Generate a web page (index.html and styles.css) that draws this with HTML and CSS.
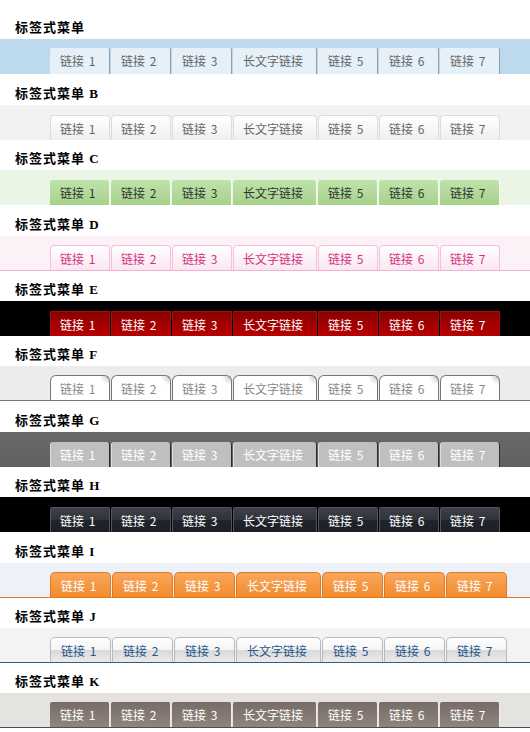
FILE: index.html
```html
<!DOCTYPE html>
<html lang="zh-CN">
<head>
    <meta charset="UTF-8">
    <meta name="viewport" content="width=device-width, initial-scale=1.0">
    <title>标签式菜单</title>
    <link rel="stylesheet" href="styles.css">
</head>
<body>
    <div class="menu menu-a">
        <h3 class="menu-title">标签式菜单</h3>
        <div class="menu-bar">
            <ul class="tabs">
                <li><a href="#">链接 1</a></li>
                <li><a href="#">链接 2</a></li>
                <li><a href="#">链接 3</a></li>
                <li><a href="#">长文字链接</a></li>
                <li><a href="#">链接 5</a></li>
                <li><a href="#">链接 6</a></li>
                <li><a href="#">链接 7</a></li>
            </ul>
        </div>
    </div>

    <div class="menu menu-b">
        <h3 class="menu-title">标签式菜单 B</h3>
        <div class="menu-bar">
            <ul class="tabs">
                <li><a href="#">链接 1</a></li>
                <li><a href="#">链接 2</a></li>
                <li><a href="#">链接 3</a></li>
                <li><a href="#">长文字链接</a></li>
                <li><a href="#">链接 5</a></li>
                <li><a href="#">链接 6</a></li>
                <li><a href="#">链接 7</a></li>
            </ul>
        </div>
    </div>

    <div class="menu menu-c">
        <h3 class="menu-title">标签式菜单 C</h3>
        <div class="menu-bar">
            <ul class="tabs">
                <li><a href="#">链接 1</a></li>
                <li><a href="#">链接 2</a></li>
                <li><a href="#">链接 3</a></li>
                <li><a href="#">长文字链接</a></li>
                <li><a href="#">链接 5</a></li>
                <li><a href="#">链接 6</a></li>
                <li><a href="#">链接 7</a></li>
            </ul>
        </div>
    </div>

    <div class="menu menu-d">
        <h3 class="menu-title">标签式菜单 D</h3>
        <div class="menu-bar">
            <ul class="tabs">
                <li><a href="#">链接 1</a></li>
                <li><a href="#">链接 2</a></li>
                <li><a href="#">链接 3</a></li>
                <li><a href="#">长文字链接</a></li>
                <li><a href="#">链接 5</a></li>
                <li><a href="#">链接 6</a></li>
                <li><a href="#">链接 7</a></li>
            </ul>
        </div>
    </div>

    <div class="menu menu-e">
        <h3 class="menu-title">标签式菜单 E</h3>
        <div class="menu-bar">
            <ul class="tabs">
                <li><a href="#">链接 1</a></li>
                <li><a href="#">链接 2</a></li>
                <li><a href="#">链接 3</a></li>
                <li><a href="#">长文字链接</a></li>
                <li><a href="#">链接 5</a></li>
                <li><a href="#">链接 6</a></li>
                <li><a href="#">链接 7</a></li>
            </ul>
        </div>
    </div>

    <div class="menu menu-f">
        <h3 class="menu-title">标签式菜单 F</h3>
        <div class="menu-bar">
            <ul class="tabs">
                <li><a href="#">链接 1</a></li>
                <li><a href="#">链接 2</a></li>
                <li><a href="#">链接 3</a></li>
                <li><a href="#">长文字链接</a></li>
                <li><a href="#">链接 5</a></li>
                <li><a href="#">链接 6</a></li>
                <li><a href="#">链接 7</a></li>
            </ul>
        </div>
    </div>

    <div class="menu menu-g">
        <h3 class="menu-title">标签式菜单 G</h3>
        <div class="menu-bar">
            <ul class="tabs">
                <li><a href="#">链接 1</a></li>
                <li><a href="#">链接 2</a></li>
                <li><a href="#">链接 3</a></li>
                <li><a href="#">长文字链接</a></li>
                <li><a href="#">链接 5</a></li>
                <li><a href="#">链接 6</a></li>
                <li><a href="#">链接 7</a></li>
            </ul>
        </div>
    </div>

    <div class="menu menu-h">
        <h3 class="menu-title">标签式菜单 H</h3>
        <div class="menu-bar">
            <ul class="tabs">
                <li><a href="#">链接 1</a></li>
                <li><a href="#">链接 2</a></li>
                <li><a href="#">链接 3</a></li>
                <li><a href="#">长文字链接</a></li>
                <li><a href="#">链接 5</a></li>
                <li><a href="#">链接 6</a></li>
                <li><a href="#">链接 7</a></li>
            </ul>
        </div>
    </div>

    <div class="menu menu-i">
        <h3 class="menu-title">标签式菜单 I</h3>
        <div class="menu-bar">
            <ul class="tabs">
                <li><a href="#">链接 1</a></li>
                <li><a href="#">链接 2</a></li>
                <li><a href="#">链接 3</a></li>
                <li><a href="#">长文字链接</a></li>
                <li><a href="#">链接 5</a></li>
                <li><a href="#">链接 6</a></li>
                <li><a href="#">链接 7</a></li>
            </ul>
        </div>
    </div>

    <div class="menu menu-j">
        <h3 class="menu-title">标签式菜单 J</h3>
        <div class="menu-bar">
            <ul class="tabs">
                <li><a href="#">链接 1</a></li>
                <li><a href="#">链接 2</a></li>
                <li><a href="#">链接 3</a></li>
                <li><a href="#">长文字链接</a></li>
                <li><a href="#">链接 5</a></li>
                <li><a href="#">链接 6</a></li>
                <li><a href="#">链接 7</a></li>
            </ul>
        </div>
    </div>

    <div class="menu menu-k">
        <h3 class="menu-title">标签式菜单 K</h3>
        <div class="menu-bar">
            <ul class="tabs">
                <li><a href="#">链接 1</a></li>
                <li><a href="#">链接 2</a></li>
                <li><a href="#">链接 3</a></li>
                <li><a href="#">长文字链接</a></li>
                <li><a href="#">链接 5</a></li>
                <li><a href="#">链接 6</a></li>
                <li><a href="#">链接 7</a></li>
            </ul>
        </div>
    </div>
</body>
</html>
```

FILE: styles.css
```css
body {
    margin: 0;
    padding-top: 9px;
    background: #fff;
    font-family: "Noto Sans CJK SC", sans-serif;
}
.menu-title {
    margin: 0;
    padding: 8.4px 0 0 15px;
    height: 22px;
    line-height: 22px;
    font-family: "Liberation Serif", "Noto Sans CJK SC", serif;
    font-size: 13px;
    font-weight: bold;
    letter-spacing: 1px;
    color: #000;
}
.menu-bar {
    box-sizing: border-box;
    height: 35px;
    padding-left: 50px;
    display: flex;
    align-items: flex-end;
}
.tabs {
    display: flex;
    gap: 1px;
    margin: 0;
    padding: 0;
    list-style: none;
}
.tabs a {
    display: block;
    box-sizing: border-box;
    min-width: 60px;
    height: 25px;
    padding: 0 13px 0 10px;
    line-height: 25px;
    font-size: 12px;
    word-spacing: 2px;
    white-space: nowrap;
    text-decoration: none;
}

/* A - light blue */
.menu-a .menu-bar { background: #bcd9ed; }
.menu-a .tabs a {
    height: 26px;
    line-height: 26px;
    background: #e5f0f8;
    border-right: 1px solid #8e9eac;
    border-radius: 2px 2px 0 0;
    color: #666;
}

/* B - light grey */
.menu-b .menu-bar { background: #f2f2f2; }
.menu-b .tabs a {
    padding-left: 9px;
    background: linear-gradient(#fff, #efefef);
    border: 1px solid #dcdcdc;
    border-bottom: 0;
    border-radius: 4px 4px 0 0;
    color: #666;
}

/* C - green */
.menu-c .menu-bar { background: #eaf5e6; }
.menu-c .tabs a {
    background: linear-gradient(#bfe3aa, #a6d28c);
    border-right: 1px solid #f6fbf3;
    border-radius: 3px 3px 0 0;
    color: #333;
}

/* D - pink */
.menu-d .menu-bar {
    background: #fcf1f7;
    border-bottom: 1px solid #eeb3d2;
}
.menu-d .tabs a {
    padding-left: 9px;
    background: linear-gradient(#fff, #fbe6f1);
    border: 1px solid #f4c0da;
    border-bottom: 0;
    border-radius: 4px 4px 0 0;
    color: #d2337f;
}

/* E - red on black */
.menu-e .menu-bar { background: #000; }
.menu-e .tabs a {
    padding-left: 9px;
    background: linear-gradient(#8a0000, #b80000);
    border: 1px solid #a30c0c;
    border-bottom: 0;
    color: #fff;
}

/* F - outlined, curled corner */
.menu-f .menu-bar {
    background: #ececec;
    border-bottom: 1px solid #777;
}
.menu-f .tabs a {
    padding-left: 9px;
    background: radial-gradient(circle at 100% 0, #c4c4c4 0, #fff 9px), #fff;
    border: 1px solid #777;
    border-bottom: 0;
    border-radius: 6px 6px 0 0;
    color: #888;
}

/* G - dark grey */
.menu-g .menu-bar { background: linear-gradient(#6a6a6a, #606060); }
.menu-g .tabs a {
    padding-left: 9px;
    background: #bfbfbf;
    border-left: 1px solid #dcdcdc;
    border-right: 1px solid #2b2b2b;
    border-radius: 3px 3px 0 0;
    color: #fff;
}

/* H - black glossy */
.menu-h .menu-bar { background: #000; }
.menu-h .tabs a {
    padding-left: 9px;
    background: linear-gradient(#3c4149 0, #2f343b 50%, #22262c 50%, #1b1f25 100%);
    border: 1px solid #50545b;
    border-bottom: 0;
    border-radius: 2px 2px 0 0;
    color: #fff;
}

/* I - orange */
.menu-i .menu-bar {
    background: #edf2f9;
    border-bottom: 1px solid #e3781e;
}
.menu-i .tabs a,
.menu-j .tabs a {
    min-width: 61px;
    padding: 0 13px 0 10px;
    border-radius: 5px 5px 0 0;
}
.menu-i .tabs a {
    background: linear-gradient(#f9a65c, #f28b2c);
    border: 1px solid #e3781e;
    border-bottom: 0;
    color: #fff;
}

/* J - silver with blue text */
.menu-j .menu-bar {
    background: #f3f3f3;
    border-bottom: 1px solid #2d5d8b;
}
.menu-j .tabs a {
    background: linear-gradient(#fff 0, #f5f5f5 48%, #d9d9d9 52%, #ebebeb 100%);
    border: 1px solid #b9b9b9;
    border-bottom: 0;
    color: #24578a;
}

/* K - taupe */
.menu-k .menu-bar {
    background: #e5e3df;
    border-bottom: 1px solid #4d4d55;
}
.menu-k .tabs a {
    background: linear-gradient(#776c67, #8e857b);
    border-right: 1px solid #eeece8;
    border-radius: 2px 2px 0 0;
    color: #fff;
}
```
